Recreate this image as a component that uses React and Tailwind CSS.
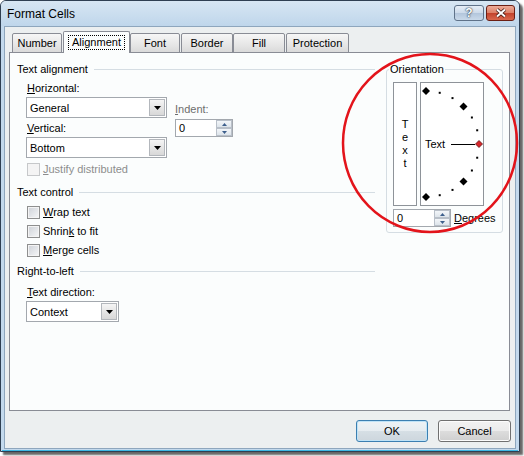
const font = "font-['Liberation_Sans',Arial,sans-serif]";

function Heading({ children }) {
  return (
    <div className="flex h-[14px] items-center leading-[14px]">
      <span>{children}</span>
      <div className="ml-[6px] h-px flex-1 bg-[#d5dde3]" />
    </div>
  );
}

function Select({ value, className }) {
  return (
    <div className={`flex h-[21px] items-center border border-[#a3a8ae] bg-white ${className}`}>
      <span className="flex-1 pl-[3px] leading-[14px]">{value}</span>
      <span className="mr-px flex h-[17px] w-[16px] items-center justify-center border border-[#b3b7bc] bg-[linear-gradient(#f5f5f5,#e6e6e6_50%,#d8d8d8)]">
        <svg width="7" height="4" viewBox="0 0 7 4">
          <path d="M0 0h7L3.5 4z" fill="#000" />
        </svg>
      </span>
    </div>
  );
}

function Spinner({ value }) {
  return (
    <div className="flex h-[18px] w-[58px] border border-[#a3a8ae] bg-white">
      <span className="flex-1 pl-[3px] leading-[16px]">{value}</span>
      <div className="flex w-[16px] flex-col">
        {['M0 3h5L2.5 0z', 'M0 0h5L2.5 3z'].map((d) => (
          <span
            key={d}
            className="flex h-[8px] items-center justify-center border border-[#b9c0c9] bg-[linear-gradient(#f3f6f9,#dde4ea)]"
          >
            <svg width="5" height="3" viewBox="0 0 5 3">
              <path d={d} fill="#3d5f8c" />
            </svg>
          </span>
        ))}
      </div>
    </div>
  );
}

function Check({ label, disabled }) {
  return (
    <div className="ml-[10px] flex h-[14px] items-center gap-[3px] leading-[14px]">
      <span
        className={
          disabled
            ? 'h-[13px] w-[13px] border border-[#c6c8ca] bg-[#f4f4f4]'
            : 'h-[13px] w-[13px] border border-[#8e8f8f] bg-[linear-gradient(135deg,#cdd1d7,#f6f7f8)] shadow-[inset_0_0_0_1px_#f4f4f4]'
        }
      />
      <span className={disabled ? 'text-[#8d8d8d]' : ''}>{label}</span>
    </div>
  );
}

const tabBase =
  'flex h-[20px] items-center justify-center rounded-t-[2px] border border-[#898c95] bg-[linear-gradient(#f6f6f6,#e9e9e9_50%,#dadada)]';

function Dial() {
  const dots = [75, 60, 30, 15, -15, -30, -60, -75].map((a) => {
    const r = (a * Math.PI) / 180;
    return [5 + 53 * Math.cos(r), 61 - 53 * Math.sin(r)];
  });
  const diamonds = [90, 45, -45, -90].map((a) => {
    const r = (a * Math.PI) / 180;
    return [5 + 53 * Math.cos(r), 61 - 53 * Math.sin(r)];
  });
  return (
    <svg width="62" height="122" viewBox="0 0 62 122">
      {dots.map(([x, y], i) => (
        <rect key={i} x={x - 1} y={y - 1} width="2" height="2" fill="#000" />
      ))}
      {diamonds.map(([x, y], i) => (
        <path key={i} d={`M${x} ${y - 4}L${x + 4} ${y}L${x} ${y + 4}L${x - 4} ${y}z`} fill="#000" />
      ))}
      <text x="4" y="65" fontSize="11" fontFamily="Liberation Sans, Arial, sans-serif" fill="#000">
        Text
      </text>
      <line x1="30" y1="61.5" x2="54" y2="61.5" stroke="#000" strokeWidth="1" />
      <path d="M58 57.5L61.5 61L58 64.5L54.5 61z" fill="#d8262a" stroke="#5a1010" strokeWidth="0.8" />
    </svg>
  );
}

export default function App() {
  return (
    <div className={`relative h-[456px] w-[524px] overflow-hidden bg-white text-[11px] text-black ${font}`}>
      <div className="flex h-[452px] w-[520px] flex-col rounded-t-[6px] border border-[#2f3f52] bg-[#c3d9ed] shadow-[3px_3px_2px_rgba(0,0,0,0.6)]">
        <div className="flex h-[25px] items-start justify-between rounded-t-[5px] bg-[linear-gradient(#d7e6f3,#bfd6eb)] pl-[6px] pr-[4px]">
          <span className="mt-[6px] text-[12px] leading-[14px]">Format Cells</span>
          <div className="mt-[4px] flex gap-[2px]">
            <span className="flex h-[16px] w-[30px] items-center justify-center rounded-[3px] border border-[#5f7289] bg-[linear-gradient(#e6eef7_0%,#ccdaea_50%,#b2c5db_50%,#c9d9ea_100%)] text-[12px] font-bold leading-none text-white [text-shadow:0_0_2px_#1d2c3e,0_0_1px_#1d2c3e]">
              ?
            </span>
            <span className="flex h-[16px] w-[29px] items-center justify-center rounded-[3px] border border-[#6b1f14] bg-[linear-gradient(#eeab98_0%,#dc7f66_50%,#c2412b_50%,#d9684d_100%)]">
              <svg width="12" height="10" viewBox="0 0 12 10">
                <path d="M2 1.5L10 8.5M10 1.5L2 8.5" stroke="#3a120c" strokeWidth="3.6" />
                <path d="M2 1.5L10 8.5M10 1.5L2 8.5" stroke="#fff" strokeWidth="2" />
              </svg>
            </span>
          </div>
        </div>

        <div className="mx-[3px] h-[423px] border border-[#8ea6bd] bg-[#eceff0] pt-[4px]">
          <div className="relative z-10 -mb-px ml-[7px] flex items-end">
            <div className={`${tabBase} w-[50px]`}>Number</div>
            <div className="ml-px flex h-[22px] w-[67px] items-center justify-center rounded-t-[2px] border border-b-0 border-[#898c95] bg-[#fbfdfd] pb-[1px]">
              <span className="border border-dotted border-black px-[3px] leading-[13px]">Alignment</span>
            </div>
            <div className={`${tabBase} w-[50px]`}>Font</div>
            <div className={`${tabBase} ml-px w-[52px]`}>Border</div>
            <div className={`${tabBase} w-[52px]`}>Fill</div>
            <div className={`${tabBase} ml-px w-[63px]`}>Protection</div>
          </div>

          <div className="ml-[4px] flex h-[359px] w-[501px] border border-[#898c95] bg-[#fbfdfd]">
            <div className="flex w-[365px] flex-col pl-[7px] pt-[9px]">
              <Heading>Text alignment</Heading>
              <div className="mt-[5px] flex">
                <div className="ml-[10px] flex w-[140px] flex-col">
                  <span className="h-[14px] leading-[14px]">
                    <span className="underline">H</span>orizontal:
                  </span>
                  <Select value="General" className="mt-[2px] -ml-px w-[141px]" />
                  <span className="mt-[3px] h-[14px] leading-[14px]">
                    <span className="underline">V</span>ertical:
                  </span>
                  <Select value="Bottom" className="mt-[2px] -ml-px w-[141px]" />
                </div>
                <div className="ml-[8px] flex flex-col">
                  <span className="mt-[21px] h-[14px] leading-[14px] text-[#6d6d6d]">
                    <span className="underline">I</span>ndent:
                  </span>
                  <div className="mt-[3px]">
                    <Spinner value="0" />
                  </div>
                </div>
              </div>
              <div className="mt-[4px]">
                <Check
                  disabled
                  label={
                    <>
                      <span className="underline">J</span>ustify distributed
                    </>
                  }
                />
              </div>

              <div className="mt-[9px]">
                <Heading>Text control</Heading>
              </div>
              <div className="mt-[6px]">
                <Check
                  label={
                    <>
                      <span className="underline">W</span>rap text
                    </>
                  }
                />
              </div>
              <div className="mt-[5px]">
                <Check
                  label={
                    <>
                      Shrin<span className="underline">k</span> to fit
                    </>
                  }
                />
              </div>
              <div className="mt-[5px]">
                <Check
                  label={
                    <>
                      <span className="underline">M</span>erge cells
                    </>
                  }
                />
              </div>

              <div className="mt-[7px]">
                <Heading>Right-to-left</Heading>
              </div>
              <span className="ml-[10px] mt-[7px] h-[14px] leading-[14px]">
                <span className="underline">T</span>ext direction:
              </span>
              <Select value="Context" className="ml-[9px] mt-[2px] w-[93px]" />
            </div>

            <fieldset className="ml-[11px] mt-[9px] h-[171px] w-[114px] rounded-[3px] border border-[#d5dde3] px-[6px]">
              <legend className="ml-[-4px] px-px leading-[14px]">Orientation</legend>
              <div className="mt-[6px] flex gap-[3px]">
                <div className="flex h-[124px] w-[24px] flex-col items-center justify-center border border-[#8e9399] bg-white leading-[13px]">
                  <span>T</span>
                  <span>e</span>
                  <span>x</span>
                  <span>t</span>
                </div>
                <div className="h-[124px] w-[64px] border border-[#8e9399] bg-white">
                  <Dial />
                </div>
              </div>
              <div className="mt-[3px] flex items-center">
                <Spinner value="0" />
                <span className="ml-[3px] leading-[14px]">
                  <span className="underline">D</span>egrees
                </span>
              </div>
            </fieldset>
          </div>

          <div className="ml-[351px] mt-[9px] flex gap-[10px]">
            <div className="flex h-[22px] w-[72px] items-center justify-center rounded-[3px] border border-[#3c7fb1] bg-[linear-gradient(#eef3f6_0%,#e6ecf0_50%,#d6dfe5_50%,#cdd6dd_100%)] shadow-[inset_0_0_0_1px_#bfe3f7]">
              OK
            </div>
            <div className="flex h-[22px] w-[73px] items-center justify-center rounded-[3px] border border-[#707070] bg-[linear-gradient(#f2f2f2_0%,#ebebeb_50%,#dddddd_50%,#cfcfcf_100%)] shadow-[inset_0_0_0_1px_#fcfcfc]">
              Cancel
            </div>
          </div>
        </div>
        <div className="mx-[1px] mt-[1px] h-[1px] bg-[#3bb7e3]" />
      </div>

      <svg className="pointer-events-none absolute left-0 top-0" width="524" height="456">
        <ellipse cx="430" cy="143" rx="87" ry="89" fill="none" stroke="#e3141b" strokeWidth="2.5" />
      </svg>
    </div>
  );
}
